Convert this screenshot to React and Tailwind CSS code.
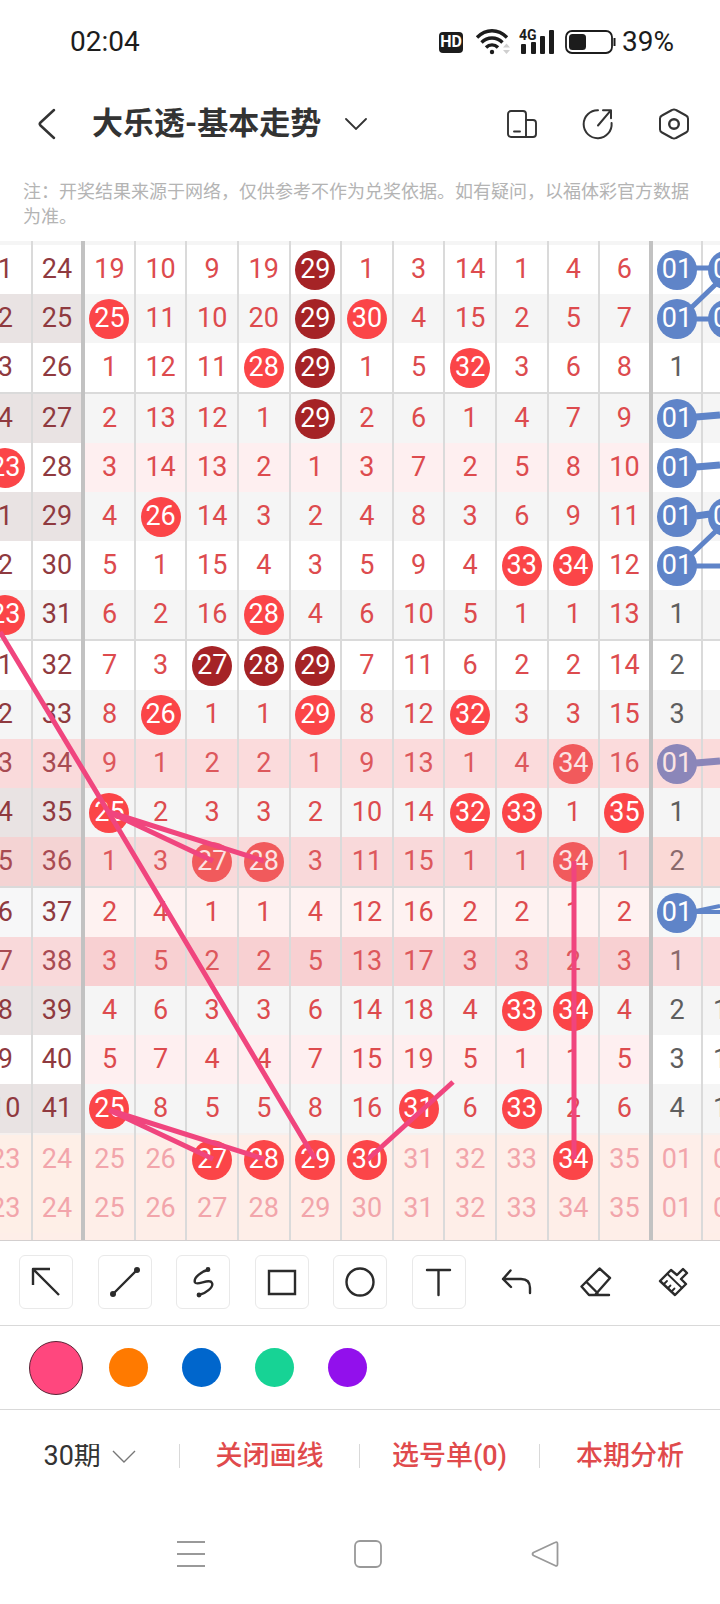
import { useState } from 'react';

const CELL_TEXT = 'text-[#dd4b4e]';
const MISS_TEXT = 'text-[#8f3a3f]';
const BACK_TEXT = 'text-[#5e5e5e]';

// r = hit, d = hot hit, b = back zone hit, everything else is a miss count
const rows = [
  { cells: '1 24 19 10 9 19 d29 1 3 14 1 4 6 b01 b02', tone: 'plain' },
  { cells: '2 25 r25 11 10 20 d29 r30 4 15 2 5 7 b01 b02', tone: 'grey' },
  { cells: '3 26 1 12 11 r28 d29 1 5 r32 3 6 8 1 -', tone: 'plain' },
  { cells: '4 27 2 13 12 1 d29 2 6 1 4 7 9 b01 -', tone: 'grey' },
  { cells: 'r23 28 3 14 13 2 1 3 7 2 5 8 10 b01 -', tone: 'rose' },
  { cells: '1 29 4 r26 14 3 2 4 8 3 6 9 11 b01 b02', tone: 'grey' },
  { cells: '2 30 5 1 15 4 3 5 9 4 r33 r34 12 b01 -', tone: 'plain' },
  { cells: 'r23 31 6 2 16 r28 4 6 10 5 1 1 13 1 -', tone: 'soft' },
  { cells: '1 32 7 3 d27 d28 d29 7 11 6 2 2 14 2 -', tone: 'plain' },
  { cells: '2 33 8 r26 1 1 r29 8 12 r32 3 3 15 3 -', tone: 'soft' },
  { cells: '3 34 9 1 2 2 1 9 13 1 4 r34 16 b01 -', tone: 'marked' },
  { cells: '4 35 r25 2 3 3 2 10 14 r32 r33 1 r35 1 -', tone: 'grey' },
  { cells: '5 36 1 3 r27 r28 3 11 15 1 1 r34 1 2 -', tone: 'markedGrey' },
  { cells: '6 37 2 4 1 1 4 12 16 2 2 1 2 b01 -', tone: 'roseSoft' },
  { cells: '7 38 3 5 2 2 5 13 17 3 3 2 3 1 -', tone: 'markedRose' },
  { cells: '8 39 4 6 3 3 6 14 18 4 r33 r34 4 2 10', tone: 'grey' },
  { cells: '9 40 5 7 4 4 7 15 19 5 1 1 5 3 11', tone: 'rose' },
  { cells: '10 41 r25 8 5 5 8 16 r31 6 r33 2 6 4 12', tone: 'grey' },
  { cells: '23 24 25 26 r27 r28 r29 r30 31 32 33 r34 35 01 02', tone: 'pick' },
  { cells: '23 24 25 26 27 28 29 30 31 32 33 34 35 01 02', tone: 'pick' },
];

const tones = {
  plain: { left: 'bg-white', mid: 'bg-white', right: 'bg-white' },
  grey: { left: 'bg-[#e9e3e3]', mid: 'bg-[#f5f5f5]', right: 'bg-[#f5f5f5]' },
  soft: { left: 'bg-[#f5f5f5]', mid: 'bg-[#f5f5f5]', right: 'bg-[#f5f5f5]' },
  rose: { left: 'bg-white', mid: 'bg-[#feeff0]', right: 'bg-white' },
  roseSoft: { left: 'bg-[#f7f7f8]', mid: 'bg-[#fef2f1]', right: 'bg-[#f6f8f8]' },
  marked: { left: 'bg-[#fadadb]', mid: 'bg-[#fbdbdc]', right: 'bg-[#fbdbdb]', dim: true },
  markedGrey: { left: 'bg-[#f4d3d3]', mid: 'bg-[#f9d9da]', right: 'bg-[#fad9d6]', dim: true },
  markedRose: { left: 'bg-[#f9d9da]', mid: 'bg-[#f8d0d2]', right: 'bg-[#fadadc]', dim: true },
  pick: { left: 'bg-[#feefe7]', mid: 'bg-[#feeee8]', right: 'bg-[#feeee9]', pick: true },
};

const balls = {
  r: 'bg-[#fb4548]',
  d: 'bg-[#a52326]',
  b: 'bg-[#5f84c8]',
};

const dimBalls = {
  r: 'bg-[#f15a5c]',
  d: 'bg-[#a52326]',
  b: 'bg-[#8b86b9]',
};

function zoneOf(col) {
  if (col < 2) return 'left';
  return col < 13 ? 'mid' : 'right';
}

function edgeOf(col) {
  if (col === 1 || col === 12) return 'border-r-4 border-r-[#c2c2c2]';
  return 'border-r-2 border-r-[#dadada]';
}

function textOf(col, tone) {
  if (tone.pick) return 'text-[#f2a5ab]';
  if (col < 2) return tone.dim ? 'text-[#a84b52]' : MISS_TEXT;
  if (col < 13) return tone.dim ? 'text-[#dd585c]' : CELL_TEXT;
  return tone.dim ? 'text-[#8a6b6c]' : BACK_TEXT;
}

function Cell({ value, col, tone }) {
  const kind = value[0];
  const isBall = kind in balls;
  const palette = tone.dim ? dimBalls : balls;

  return (
    <td className={`p-0 text-center ${edgeOf(col)} ${tone[zoneOf(col)]} ${textOf(col, tone)}`}>
      {isBall ? (
        <span className={`mx-auto -my-px flex size-10 items-center justify-center rounded-full ${palette[kind]} ${tone.dim ? 'text-[#fbe4e4]' : 'text-white'}`}>
          <span className="pb-0.5">{value.slice(1)}</span>
        </span>
      ) : (
        <span className="block pb-0.5">{value === '-' ? '' : value}</span>
      )}
    </td>
  );
}

function TrendTable() {
  return (
    <div className="relative overflow-hidden border-b border-[#d3cfcf]">
      <table className="-ml-5 w-[calc(100%+55px)] table-fixed border-collapse text-[27px] leading-8">
        <tbody>
          <tr className="h-1">
            {rows[0].cells.split(' ').map((_, col) => (
              <td key={col} className={`bg-[#f5f5f5] p-0 ${edgeOf(col)}`} />
            ))}
          </tr>
          {rows.map((row, i) => {
            const tone = tones[row.tone];
            const endsGroup = i % 5 === 2;
            const startsGroup = i > 0 && i % 5 === 3;
            const line = i === 17 ? 'border-b-2 border-b-[#f6f0ee]' : 'border-b-2 border-b-[#dadada]';
            return (
              <tr
                key={i}
                className={`${endsGroup || startsGroup ? 'h-[50px]' : 'h-[49px]'} ${endsGroup ? line : ''}`}
              >
                {row.cells.split(' ').map((value, col) => (
                  <Cell key={col} value={value} col={col} tone={tone} />
                ))}
              </tr>
            );
          })}
          <tr className="h-[7px]">
            {rows[0].cells.split(' ').map((_, col) => (
              <td key={col} className={`bg-[#feeee8] p-0 ${edgeOf(col)}`} />
            ))}
          </tr>
        </tbody>
      </table>

      {/* Back zone links and the user's pen strokes */}
      <svg className="pointer-events-none absolute inset-0 h-full w-full" viewBox="0 0 720 999" preserveAspectRatio="none" fill="none">
        <g stroke="#5f84c8" strokeWidth="5">
          <path d="M696 27H710M692 66L716 43M696 78H710" />
          <path d="M696 176L720 174" strokeWidth="7" />
          <path d="M696 226L720 224" strokeWidth="7" />
          <path d="M696 275L710 273" strokeWidth="7" />
          <path d="M692 313L716 290M696 325H720" />
          <path d="M696 670L720 665M696 671H720" strokeWidth="4" />
        </g>
        <path d="M696 522L720 520" stroke="#8b86b9" strokeWidth="7" />
        <g stroke="#f0457e" strokeWidth="5">
          <path d="M0 391L109 572L315 918" />
          <path d="M109 571L213 620M109 571L264 620" />
          <path d="M109 869L213 918M109 869L264 918" />
          <path d="M367 919L453 841" />
          <path d="M574 620V918" />
        </g>
      </svg>
    </div>
  );
}

function StatusBar() {
  return (
    <div className="flex h-[84px] items-center justify-between pr-[46px] pl-[70px] text-[28px] text-[#1c1c1c]">
      <span>02:04</span>
      <div className="flex items-center">
        <span className="flex h-[21px] w-6 items-center justify-center rounded bg-[#1c1c1c] text-base font-bold text-white">HD</span>
        <svg className="ml-3 h-7 w-[38px]" viewBox="0 0 38 28" fill="none" stroke="#1c1c1c" strokeWidth="3.4">
          <path d="M2 9.5C11 .5 23 .5 32 9.5" />
          <path d="M6.500 14.500c6-6 15-6 21 0" />
          <path d="M11 19.500c3.500-3.500 8.500-3.500 12 0" />
          <circle cx="17" cy="24" r="2.200" fill="#1c1c1c" stroke="none" />
          <path d="M31.500 15.500l3.500 4h-7zM31.500 26l3.500-4h-7z" fill="#cfcfcf" stroke="none" />
        </svg>
        <div className="relative ml-1.5 h-7 w-9">
          <span className="absolute top-0 left-0 text-sm leading-none font-bold">4G</span>
          <svg className="h-7 w-9" viewBox="0 0 36 28" fill="#1c1c1c">
            <rect x="2" y="16" width="5" height="10" rx="1" />
            <rect x="12" y="14" width="5" height="12" rx="1" />
            <rect x="21" y="8" width="5" height="18" rx="1" />
            <rect x="30" y="2" width="5" height="24" rx="1" />
          </svg>
        </div>
        <svg className="ml-2.5 h-6 w-[51px]" viewBox="0 0 51 24" fill="none" stroke="#1c1c1c">
          <rect x="1" y="1" width="46" height="22" rx="6" strokeWidth="1.800" />
          <rect x="4" y="4" width="17" height="16" rx="3.500" fill="#1c1c1c" stroke="none" />
          <path d="M49.500 8v8" strokeWidth="2" />
        </svg>
        <span className="ml-1.5">39%</span>
      </div>
    </div>
  );
}

function Header() {
  return (
    <header className="flex h-20 items-center justify-between pr-[30px] pl-9 text-[#333]">
      <div className="flex items-center">
        <button aria-label="返回">
          <svg className="h-8 w-5" viewBox="0 0 20 32" fill="none" stroke="currentColor" strokeWidth="2.500" strokeLinecap="round" strokeLinejoin="round">
            <path d="M18 2L4.500 14.500q-1.500 1.500 0 3L18 30" />
          </svg>
        </button>
        <button className="ml-9 flex items-center gap-6">
          <h1 className="text-[31px] font-bold">大乐透-基本走势</h1>
          <svg className="h-3 w-[22px]" viewBox="0 0 22 12" fill="none" stroke="currentColor" strokeWidth="1.800" strokeLinecap="round">
            <path d="M1 1l10 10L21 1" />
          </svg>
        </button>
      </div>
      <div className="flex items-center gap-11">
        <button aria-label="横屏">
          <svg className="size-8" viewBox="0 0 32 32" fill="none" stroke="currentColor" strokeWidth="1.900" strokeLinejoin="round" strokeLinecap="round">
            <path d="M5 3h12a3 3 0 0 1 3 3v23H5a3 3 0 0 1-3-3V6a3 3 0 0 1 3-3z" />
            <path d="M20 12h7a3 3 0 0 1 3 3v11a3 3 0 0 1-3 3h-7M8 23.500h6" />
          </svg>
        </button>
        <button aria-label="分享">
          <svg className="size-8" viewBox="0 0 32 32" fill="none" stroke="currentColor" strokeWidth="2" strokeLinecap="round" strokeLinejoin="round">
            <path d="M16 2.200A14 14 0 1 0 29.600 15M21 2.200h8v8M29 2.200L16 17.500" />
          </svg>
        </button>
        <button aria-label="设置">
          <svg className="size-8" viewBox="0 0 32 32" fill="none" stroke="currentColor" strokeLinejoin="round">
            <path d="M14 2q2-1.200 4 0l10 5.500q2 1 2 3v11q0 2-2 3L18 30q-2 1.200-4 0L4 24.500q-2-1-2-3v-11q0-2 2-3z" strokeWidth="2" />
            <circle cx="16" cy="16" r="4.800" strokeWidth="2.400" />
          </svg>
        </button>
      </div>
    </header>
  );
}

const tools = [
  { name: '箭头', boxed: true, icon: <path d="M3 3l26 26M3 19V3h17" strokeLinecap="butt" /> },
  {
    name: '直线',
    boxed: true,
    icon: (
      <>
        <path d="M4 28L28 4" />
        <circle cx="4" cy="28" r="1.800" fill="currentColor" />
        <circle cx="28" cy="4" r="1.800" fill="currentColor" />
      </>
    ),
  },
  {
    name: '曲线',
    boxed: true,
    icon: (
      <>
        <path d="M21 4C15 5 6 12 8 16.500C10 20 23 12 25 17C27 21 18 28 12 29" />
        <circle cx="21" cy="3.500" r="1.200" fill="currentColor" />
        <circle cx="12" cy="29" r="1.200" fill="currentColor" />
      </>
    ),
  },
  { name: '矩形', boxed: true, icon: <path d="M3 5h26v23H3z" strokeLinejoin="miter" /> },
  { name: '圆形', boxed: true, icon: <circle cx="16" cy="16" r="13.500" /> },
  { name: '文字', boxed: true, icon: <path d="M4 4h23M15.500 4v25" /> },
  { name: '撤销', icon: <path d="M9.500 4.500L2 13l8 8M2 13h18q9 0 9 9v5" /> },
  { name: '橡皮', icon: <path d="M19.500 2.500L30 12L15 29H9L1.500 20.500zM6.500 16L17.500 27M15 29h14" /> },
  {
    name: '清除',
    icon: (
      <>
        <path d="M13 4L2 15l15 14 11-11-5-5 6-6-4-4-6 6z" />
        <path d="M9.500 8L24 22M6 18l3-3M10 22l2.500-2.500M13.500 25.500l3-3" strokeWidth="1.800" />
      </>
    ),
  },
];

function Toolbar() {
  return (
    <div className="flex h-[85px] items-center justify-between border-b border-[#d9d9d9] px-[19px] pb-[3px]">
      {tools.map((tool) => (
        <button
          key={tool.name}
          aria-label={tool.name}
          className={`flex size-[54px] items-center justify-center rounded-md text-[#2b2b2b] ${tool.boxed ? 'border border-[#e9e9e9]' : ''}`}
        >
          <svg className="size-8" viewBox="0 0 32 32" fill="none" stroke="currentColor" strokeWidth="2.400" strokeLinecap="round" strokeLinejoin="round">
            {tool.icon}
          </svg>
        </button>
      ))}
    </div>
  );
}

const colors = [
  { name: '粉色', fill: 'bg-[#ff477e]' },
  { name: '橙色', fill: 'bg-[#ff7a00]' },
  { name: '蓝色', fill: 'bg-[#0066cc]' },
  { name: '绿色', fill: 'bg-[#17d395]' },
  { name: '紫色', fill: 'bg-[#9210ec]' },
];

function ColorPicker() {
  const [color, setColor] = useState('粉色');

  return (
    <div className="flex h-[84px] items-center border-b border-[#d9d9d9] pl-[19px]">
      {colors.map(({ name, fill }) => (
        <label key={name} className="flex w-[73px] items-center justify-center">
          <input
            type="radio"
            name="pen-color"
            aria-label={name}
            checked={color === name}
            onChange={() => setColor(name)}
            className={`size-[39px] appearance-none rounded-full border-[#5a2436] checked:size-[54px] checked:border ${fill}`}
          />
        </label>
      ))}
    </div>
  );
}

function ActionBar() {
  return (
    <div className="grid h-[92px] grid-cols-4 items-center divide-x divide-[#d9d9d9] text-[27px] leading-6 text-[#e04a4c]">
      <label className="flex h-6 items-center justify-center gap-2.5 text-[#333]">
        <select aria-label="期数" className="h-10 w-[58px] appearance-none bg-transparent">
          <option>30期</option>
          <option>50期</option>
          <option>100期</option>
        </select>
        <svg className="h-[13px] w-6" viewBox="0 0 24 13" fill="none" stroke="#777" strokeWidth="1.400">
          <path d="M1 1l11 11L23 1" />
        </svg>
      </label>
      <button className="h-6 font-medium">关闭画线</button>
      <button className="h-6 font-medium">选号单(0)</button>
      <button className="h-6 font-medium">本期分析</button>
    </div>
  );
}

function SystemNav() {
  return (
    <nav className="flex h-[104px] items-center justify-center gap-[149px] pl-4 text-[#999]">
      <button aria-label="最近任务">
        <svg className="size-7" viewBox="0 0 28 28" stroke="currentColor" strokeWidth="2">
          <path d="M0 2h28M0 14h28M0 26h28" />
        </svg>
      </button>
      <button aria-label="主屏幕">
        <svg className="size-7" viewBox="0 0 28 28" fill="none" stroke="currentColor" strokeWidth="1.800">
          <rect x="1" y="1" width="26" height="26" rx="5" />
        </svg>
      </button>
      <button aria-label="后退">
        <svg className="size-7" viewBox="0 0 28 28" fill="none" stroke="currentColor" strokeWidth="1.800" strokeLinejoin="round">
          <path d="M24 2.500Q26.500 1.200 26.500 4v20q0 2.800-2.500 1.500L2.500 15.500q-2-1.500 0-3z" />
        </svg>
      </button>
    </nav>
  );
}

export default function App() {
  return (
    <div className="min-h-screen bg-white font-[Roboto,'Noto_Sans_CJK_SC',sans-serif]">
      <StatusBar />
      <Header />
      <p className="h-[77px] px-[23px] pt-[15px] text-lg leading-[25px] text-[#b4b4b4]">
        注：开奖结果来源于网络，仅供参考不作为兑奖依据。如有疑问，以福体彩官方数据为准。
      </p>
      <TrendTable />
      <Toolbar />
      <ColorPicker />
      <ActionBar />
      <SystemNav />
    </div>
  );
}
